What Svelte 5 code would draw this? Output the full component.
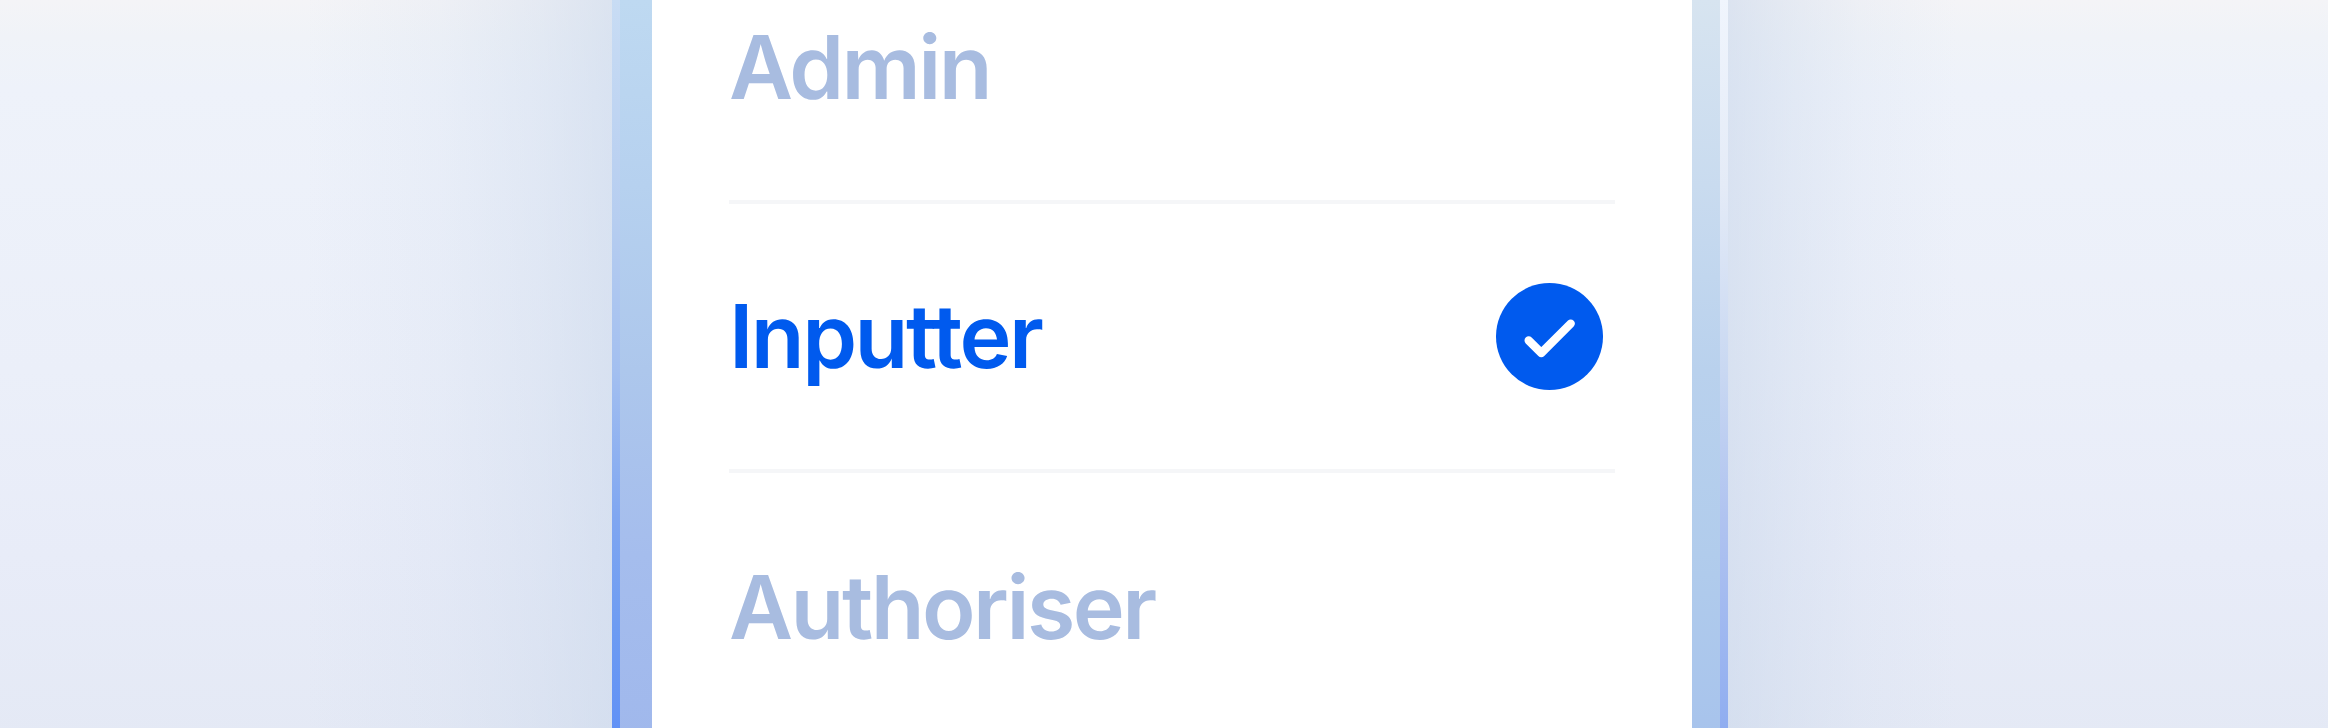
<script>
  const roles = [
    { name: 'Admin', selected: false },
    { name: 'Inputter', selected: true },
    { name: 'Authoriser', selected: false }
  ];
</script>

<div class="page">
  <div class="side side-left"></div>
  <div class="edge thin-left"></div>
  <div class="edge wide-left"></div>
  <main class="sheet">
    <ul class="list">
      {#each roles as role}
        <li class="row" class:selected={role.selected}>
          <span class="label">{role.name}</span>
          {#if role.selected}
            <svg class="check" viewBox="0 0 107 107" aria-hidden="true">
              <circle cx="53.5" cy="53.5" r="53.5" fill="#005AEE" />
              <path d="M32.7 57.5 45.3 70 74.7 40.6" fill="none" stroke="#fff" stroke-width="8.4" stroke-linecap="round" stroke-linejoin="round" />
            </svg>
          {/if}
        </li>
      {/each}
    </ul>
  </main>
  <div class="edge wide-right"></div>
  <div class="edge thin-right"></div>
  <div class="side side-right"></div>
</div>

<style>
  :global(body) {
    margin: 0;
    background: #e8ecf6;
  }
  .page {
    display: grid;
    grid-template-columns: 612px 8px 32px 1040px 28px 8px 1fr;
    height: 728px;
    overflow: hidden;
  }
  .side-left {
    background:
      linear-gradient(90deg, rgba(200, 214, 234, 0) 50%, rgba(200, 214, 234, 0.14) 72%, rgba(200, 214, 234, 0.34) 88%, rgba(200, 214, 234, 0.55) 100%),
      linear-gradient(180deg, #f4f4f7 0%, #f0f3f8 5%, #eef2fa 12%, #ebeff9 50%, #e8ecf8 75%, #e4e9f5 100%);
  }
  .side-right {
    background:
      linear-gradient(270deg, rgba(200, 214, 234, 0) 62%, rgba(200, 214, 234, 0.14) 78%, rgba(200, 214, 234, 0.34) 90%, rgba(200, 214, 234, 0.55) 100%),
      linear-gradient(180deg, #f4f4f7 0%, #f0f3f8 5%, #eef2fa 12%, #ebeff9 50%, #e8ecf8 75%, #e4e9f5 100%);
  }
  .thin-left {
    background: linear-gradient(180deg, #c8dcf4 0%, #b6cdf0 30%, #a3bff0 50%, #7fa6f1 70%, #6d9bf2 85%, #6090f6 100%);
  }
  .wide-left {
    background: linear-gradient(180deg, #bed9f1 0%, #b6d1ef 25%, #adc7ec 50%, #a5bded 75%, #a0b8ec 100%);
  }
  .wide-right {
    background: linear-gradient(180deg, #d7e4f0 0%, #c9dbef 25%, #b9d1ed 50%, #b1ccec 75%, #a7c3ec 100%);
  }
  .thin-right {
    background: linear-gradient(180deg, #f0f5fd 0%, #e4ebf7 25%, #c9d8f2 50%, #b0c3f0 70%, #8eacf0 100%);
  }
  .sheet {
    background: #fff;
    min-width: 0;
  }
  .list {
    list-style: none;
    margin: -65px 0 0;
    padding: 0 77px;
    font-family: Inter, "Liberation Sans", sans-serif;
    text-rendering: geometricPrecision;
  }
  .row {
    display: flex;
    align-items: center;
    justify-content: space-between;
    height: 265px;
    padding-right: 12px;
    border-bottom: 4px solid #f5f6f8;
    color: #a8bce0;
  }
  .row.selected {
    color: #005aee;
  }
  .row:last-child {
    border-bottom: 0;
    padding-top: 2px;
  }
  .label {
    font-size: 88px;
    font-weight: 600;
    line-height: 1;
    letter-spacing: -2.5px;
  }
  .check {
    width: 107px;
    height: 107px;
    flex: none;
  }
</style>
